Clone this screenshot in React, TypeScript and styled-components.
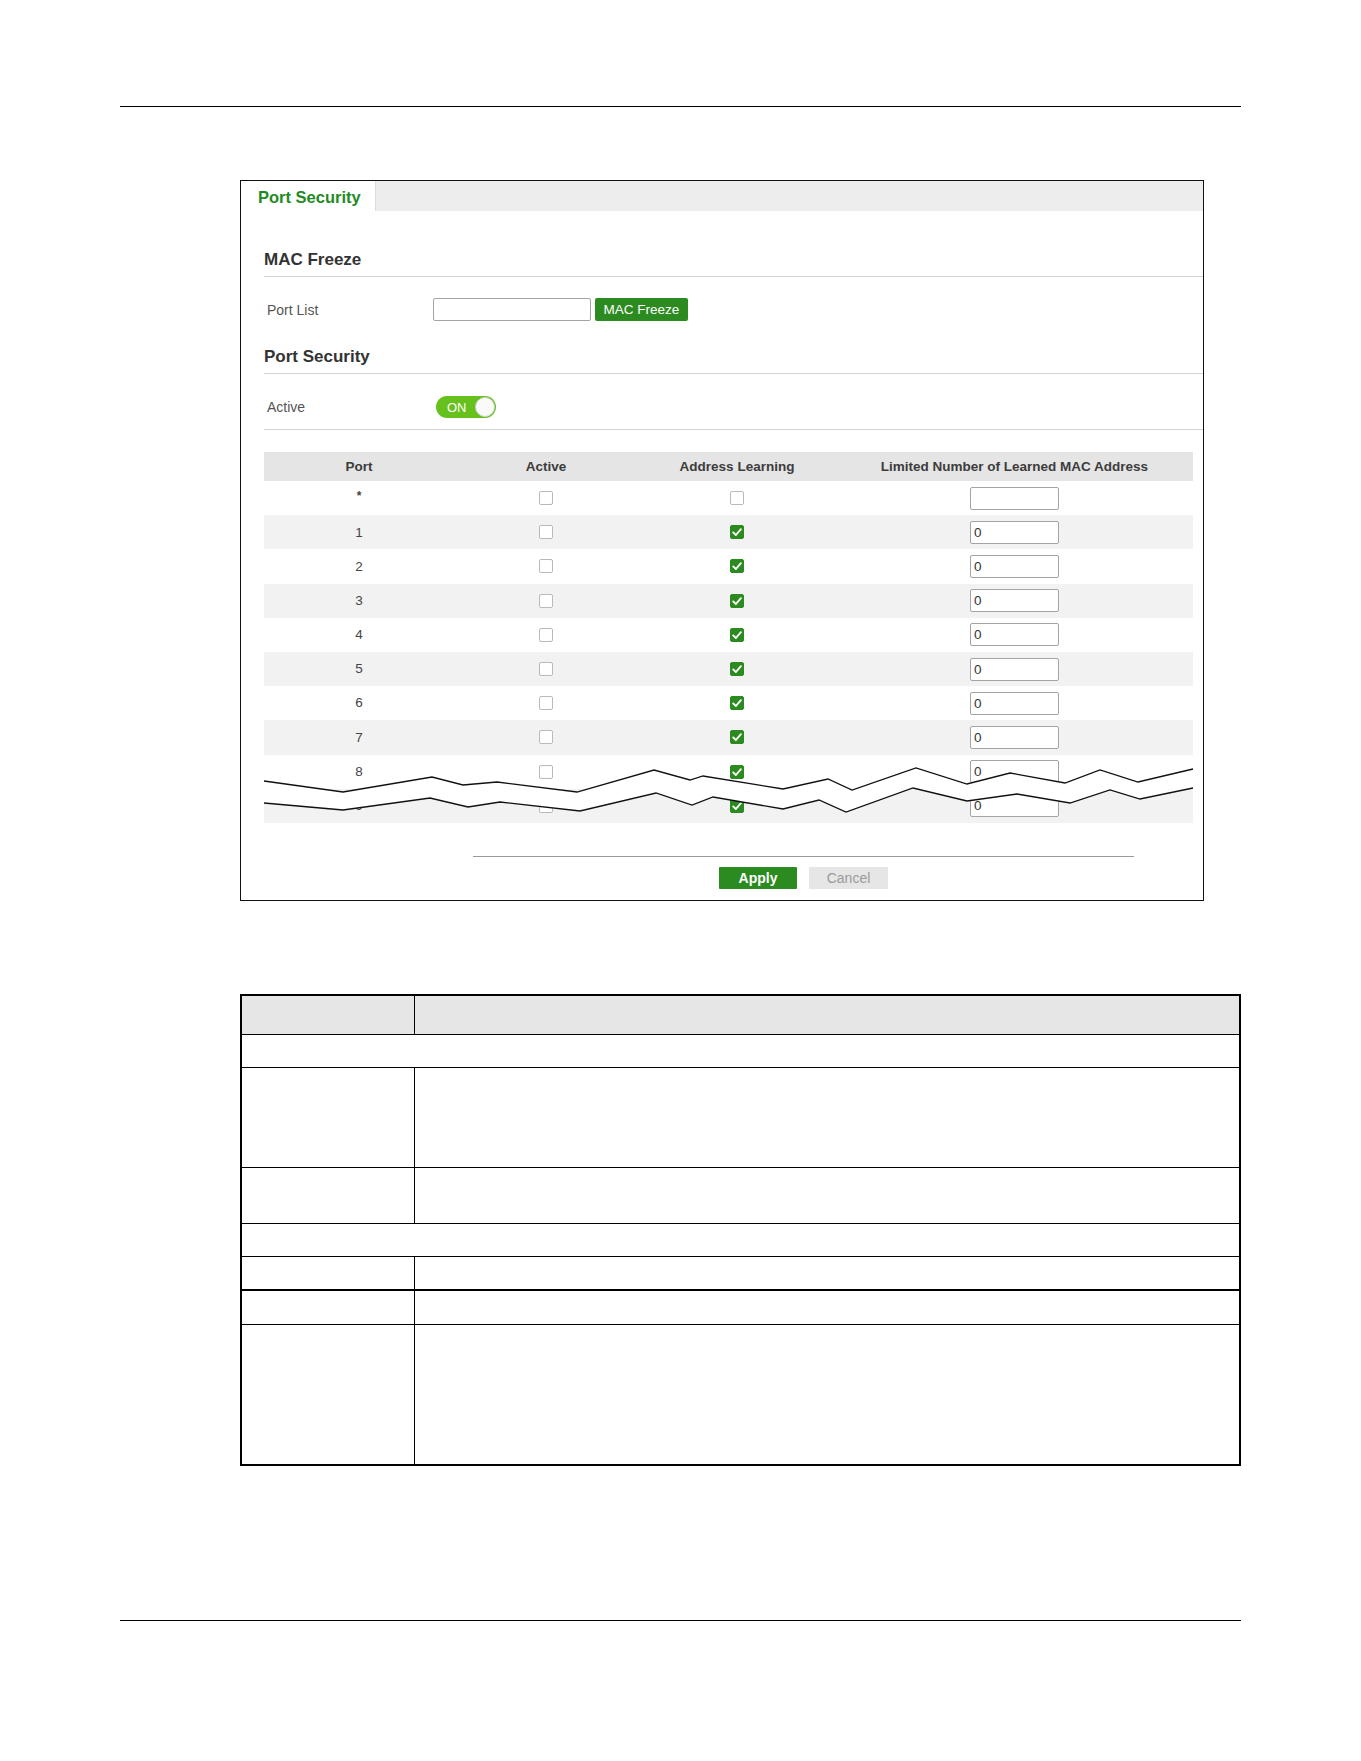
import React from "react";
import styled, { createGlobalStyle, css } from "styled-components";

const GlobalStyle = createGlobalStyle`
  html, body {
    margin: 0;
    padding: 0;
    background: #fff;
  }
  body {
    font-family: "Liberation Sans", Arial, sans-serif;
    color: #333;
  }
`;

type PortRow = {
  port: string;
  active: boolean;
  learning: boolean;
  limit: string;
};

const rows: PortRow[] = [
  { port: "*", active: false, learning: false, limit: "" },
  ...["1", "2", "3", "4", "5", "6", "7", "8", "9"].map((p) => ({
    port: p,
    active: false,
    learning: true,
    limit: "0",
  })),
];

// torn-edge break drawn across the bottom of the port table (table coords)
const tearTop: [number, number][] = [
  [0, 329], [79, 340], [168, 325], [199, 333], [233, 330], [313, 340],
  [390, 318], [426, 328], [439, 324], [519, 337], [564, 327], [588, 338],
  [652, 316], [703, 332], [746, 321], [801, 331], [836, 318], [874, 330],
  [929, 317],
];
const tearBottom: [number, number][] = [
  [0, 351], [79, 358], [166, 346], [204, 355], [236, 350], [316, 359],
  [392, 341], [428, 353], [449, 345], [519, 357], [555, 348], [582, 360],
  [649, 336], [703, 349], [753, 342], [806, 351], [846, 338], [876, 347],
  [929, 336],
];

const toPoints = (pts: [number, number][]) =>
  pts.map(([x, y]) => `${x},${y}`).join(" ");

type DescRow = { h: number; span?: boolean; thick?: boolean };

const descRows: DescRow[] = [
  { h: 33, span: true },
  { h: 100 },
  { h: 56 },
  { h: 33, span: true },
  { h: 33 },
  { h: 35, thick: true },
  { h: 140 },
];

const CheckBox = ({ checked }: { checked: boolean }) => (
  <Box $checked={checked}>
    {checked && (
      <svg width="14" height="14" viewBox="0 0 14 14">
        <path
          d="M3.2 7.4 L5.9 10 L10.9 4.2"
          fill="none"
          stroke="#fff"
          strokeWidth="1.9"
          strokeLinecap="round"
          strokeLinejoin="round"
        />
      </svg>
    )}
  </Box>
);

const App = () => {
  return (
    <>
      <GlobalStyle />
      <Page>
        <Rule $gap={0} />

        <Panel>
          <TabBar>
            <Tab>Port Security</Tab>
          </TabBar>

          <Body>
            <SectionTitle $top={39}>MAC Freeze</SectionTitle>
            <FieldRow $top={21}>
              <Label>Port List</Label>
              <TextInput type="text" defaultValue="" />
              <SmallButton>MAC Freeze</SmallButton>
            </FieldRow>

            <SectionTitle $top={26}>Port Security</SectionTitle>
            <FieldRow $top={22} $divider>
              <Label>Active</Label>
              <Toggle>
                <ToggleText>ON</ToggleText>
                <Knob />
              </Toggle>
            </FieldRow>

            <PortTable>
              <HeadRow>
                <span>Port</span>
                <span>Active</span>
                <span>Address Learning</span>
                <span>Limited Number of Learned MAC Address</span>
              </HeadRow>
              {rows.map((r, i) => (
                <BodyRow key={r.port} $alt={i % 2 === 1}>
                  <PortCell $star={r.port === "*"}>{r.port}</PortCell>
                  <Cell>
                    <CheckBox checked={r.active} />
                  </Cell>
                  <Cell>
                    <CheckBox checked={r.learning} />
                  </Cell>
                  <Cell>
                    <LimitInput type="text" defaultValue={r.limit} />
                  </Cell>
                </BodyRow>
              ))}

              <Tear viewBox="0 0 929 371" preserveAspectRatio="none">
                <polygon
                  points={toPoints([...tearTop, ...[...tearBottom].reverse()])}
                  fill="#fff"
                />
                <polyline
                  points={toPoints(tearTop)}
                  fill="none"
                  stroke="#111"
                  strokeWidth="1.3"
                />
                <polyline
                  points={toPoints(tearBottom)}
                  fill="none"
                  stroke="#111"
                  strokeWidth="1.3"
                />
              </Tear>
            </PortTable>

            <Footer>
              <ActionButton $primary>Apply</ActionButton>
              <ActionButton>Cancel</ActionButton>
            </Footer>
          </Body>
        </Panel>

        <DescTable>
          <DescHead>
            <DescKey />
            <div />
          </DescHead>
          {descRows.map((r, i) => (
            <DescLine key={i} $h={r.h} $thick={r.thick} $span={r.span}>
              {!r.span && (
                <>
                  <DescKey />
                  <div />
                </>
              )}
            </DescLine>
          ))}
        </DescTable>

        <Rule $gap={154} />
      </Page>
    </>
  );
};

export default App;

const Page = styled.div`
  width: 1361px;
  min-height: 1761px;
  box-sizing: border-box;
  padding: 106px 0 0 120px;
`;

const Rule = styled.div<{ $gap: number }>`
  width: 1121px;
  margin-top: ${({ $gap }) => $gap}px;
  border-top: 1px solid #000;
`;

const Panel = styled.div`
  width: 964px;
  height: 721px;
  margin: 73px 0 0 120px;
  box-sizing: border-box;
  border: 1px solid #111;
  display: flex;
  flex-direction: column;
`;

const TabBar = styled.div`
  display: flex;
  height: 30px;
  background: #ededed;
`;

const Tab = styled.div`
  width: 134px;
  box-sizing: border-box;
  padding: 3px 0 0 17px;
  background: #fff;
  box-shadow: 1px 0 0 #dcdcdc;
  color: #1f8a25;
  font-size: 16.5px;
  font-weight: 700;
  line-height: 27px;
`;

const Body = styled.div`
  display: flex;
  flex-direction: column;
  padding-left: 23px;
`;

const SectionTitle = styled.div<{ $top: number }>`
  margin-top: ${({ $top }) => $top}px;
  padding: 0 0 6px 0;
  border-bottom: 1px solid #d4d4d4;
  color: #333;
  font-size: 17px;
  font-weight: 700;
  line-height: 20px;
`;

const FieldRow = styled.div<{ $top: number; $divider?: boolean }>`
  display: flex;
  align-items: center;
  height: 23px;
  margin-top: ${({ $top }) => $top}px;

  ${({ $divider }) =>
    $divider &&
    css`
      height: auto;
      padding-bottom: 11px;
      border-bottom: 1px solid #d4d4d4;
    `}
`;

const Label = styled.div`
  width: 169px;
  box-sizing: border-box;
  padding-left: 3px;
  color: #555;
  font-size: 14px;
`;

const TextInput = styled.input`
  width: 158px;
  height: 23px;
  box-sizing: border-box;
  margin: 0;
  border: 1px solid #a4a4a4;
  border-radius: 2px;
  background: #fff;
`;

const SmallButton = styled.button`
  margin-left: 4px;
  width: 93px;
  height: 23px;
  padding: 0;
  border: 0;
  border-radius: 2px;
  background: #2b8a20;
  color: #fff;
  font-family: "Liberation Sans", Arial, sans-serif;
  font-size: 13.5px;
`;

const Toggle = styled.div`
  display: flex;
  align-items: center;
  justify-content: space-between;
  width: 60px;
  height: 22px;
  margin-left: 3px;
  box-sizing: border-box;
  padding: 0 1px 0 11px;
  border-radius: 11px;
  background: #67c11c;
`;

const ToggleText = styled.span`
  color: #fff;
  font-size: 13px;
`;

const Knob = styled.span`
  width: 20px;
  height: 20px;
  box-sizing: border-box;
  border-radius: 50%;
  border: 1px solid #d0d0d0;
  background: #fafafa;
`;

const columns = "190px 184px 198px 357px";

const PortTable = styled.div`
  position: relative;
  width: 929px;
  height: 371px;
  margin-top: 22px;
`;

const HeadRow = styled.div`
  display: grid;
  grid-template-columns: ${columns};
  align-items: center;
  height: 29px;
  background: #e5e5e5;
  color: #3c3c3c;
  font-size: 13.5px;
  font-weight: 700;
  text-align: center;
`;

const BodyRow = styled.div<{ $alt: boolean }>`
  display: grid;
  grid-template-columns: ${columns};
  align-items: center;
  height: 34.2px;
  background: ${({ $alt }) => ($alt ? "#f2f2f2" : "#fff")};
`;

const Cell = styled.div`
  display: flex;
  justify-content: center;
  align-items: center;
`;

const PortCell = styled.div<{ $star: boolean }>`
  text-align: center;
  color: #444;
  font-size: ${({ $star }) => ($star ? "12px" : "13.5px")};
  line-height: 1;
  ${({ $star }) =>
    $star &&
    css`
      position: relative;
      top: -2px;
      font-weight: 700;
    `}
`;

const Box = styled.span<{ $checked: boolean }>`
  display: inline-flex;
  width: 14px;
  height: 14px;
  box-sizing: border-box;
  border-radius: 2px;
  border: 1px solid ${({ $checked }) => ($checked ? "#2b8a20" : "#b9b9b9")};
  background: ${({ $checked }) => ($checked ? "#2b8a20" : "#fff")};
  overflow: hidden;

  svg {
    margin: -1px;
  }
`;

const LimitInput = styled.input`
  width: 89px;
  height: 23px;
  box-sizing: border-box;
  margin: 0;
  padding: 0 0 0 3px;
  border: 1px solid #a4a4a4;
  border-radius: 2px;
  background: #fff;
  color: #333;
  font-family: "Liberation Sans", Arial, sans-serif;
  font-size: 13.5px;
`;

const Tear = styled.svg`
  position: absolute;
  inset: 0;
  width: 100%;
  height: 100%;
  overflow: visible;
`;

const Footer = styled.div`
  display: flex;
  justify-content: center;
  gap: 12px;
  width: 661px;
  margin: 33px 0 0 209px;
  padding-top: 10px;
  border-top: 1px solid #9a9a9a;
`;

const ActionButton = styled.button<{ $primary?: boolean }>`
  width: ${({ $primary }) => ($primary ? "78px" : "79px")};
  height: 22px;
  padding: 0;
  border: 0;
  border-radius: 1px;
  background: ${({ $primary }) => ($primary ? "#2b8a20" : "#e6e6e6")};
  color: ${({ $primary }) => ($primary ? "#fff" : "#9a9a9a")};
  font-family: "Liberation Sans", Arial, sans-serif;
  font-size: 14px;
  font-weight: ${({ $primary }) => ($primary ? 700 : 400)};
`;

const DescTable = styled.div`
  width: 1001px;
  margin: 93px 0 0 120px;
  box-sizing: border-box;
  border: 2px solid #000;
`;

const DescHead = styled.div`
  display: grid;
  grid-template-columns: 173px 1fr;
  height: 38px;
  background: #e6e6e6;
`;

const DescKey = styled.div`
  border-right: 1px solid #000;
`;

const DescLine = styled.div<{ $h: number; $thick?: boolean; $span?: boolean }>`
  display: grid;
  grid-template-columns: ${({ $span }) => ($span ? "1fr" : "173px 1fr")};
  height: ${({ $h }) => $h}px;
  box-sizing: border-box;
  border-top: ${({ $thick }) => ($thick ? 2 : 1)}px solid #000;
`;
